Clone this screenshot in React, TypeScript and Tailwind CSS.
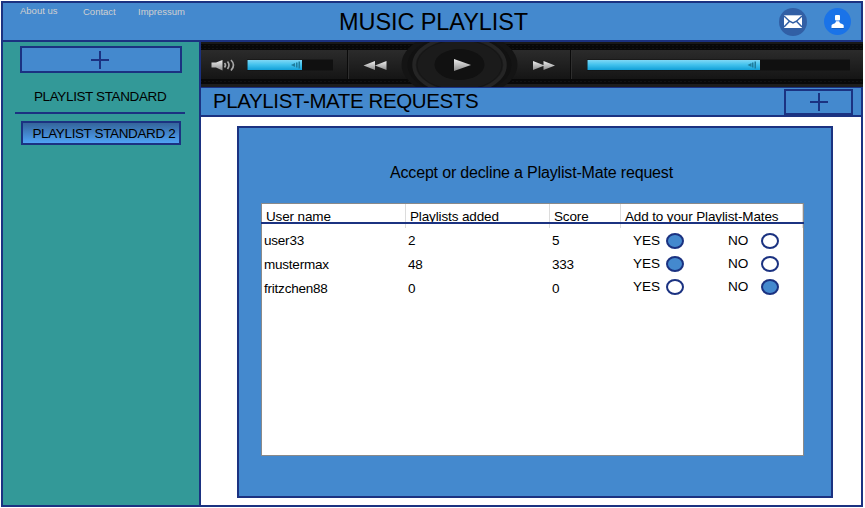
type Request = { name: string; playlists: number; score: number; accepted: boolean };

const requests: Request[] = [
  { name: 'user33', playlists: 2, score: 5, accepted: true },
  { name: 'mustermax', playlists: 48, score: 333, accepted: true },
  { name: 'fritzchen88', playlists: 0, score: 0, accepted: false },
];

function Plus() {
  return (
    <svg width="18" height="18" viewBox="0 0 18 18" className="block shrink-0" shapeRendering="crispEdges">
      <path d="M9 0V18M0 9H18" stroke="#1b3281" strokeWidth="2" />
    </svg>
  );
}

function MailIcon() {
  return (
    <svg width="28" height="28" viewBox="0 0 28 28" className="block">
      <circle cx="14" cy="14" r="14" fill="#315fa5" />
      <rect x="5" y="7.3" width="18" height="12.7" fill="#fff" />
      <path d="M5 8L10.5 13.2L14 15L17.5 13.2L23 8M5 19L10.5 13.2M23 19L17.5 13.2" fill="none" stroke="#315fa5" strokeWidth="1.5" />
    </svg>
  );
}

function UserIcon() {
  return (
    <svg width="27" height="27" viewBox="0 0 27 27" className="block">
      <circle cx="13.5" cy="13.5" r="13.5" fill="#1a73e8" />
      <path d="M8 20.5H20" stroke="#1861c4" />
      <rect x="11" y="7" width="5" height="5.5" rx="1" fill="#fff" />
      <path d="M7.5 20V17.5C7.5 16.2 9.5 16 10.5 15.5C11.5 15 11.7 14 12 13.2H15.2C15.5 14 15.7 15 16.7 15.5C17.7 16 19.7 16.2 19.7 17.5V20Z" fill="#fff" />
    </svg>
  );
}

function Player() {
  return (
    <svg width="662" height="45" viewBox="201 42 662 45" className="relative block shrink-0">
      <defs>
        <linearGradient id="body" x1="0" y1="0" x2="0" y2="1">
          <stop offset="0" stopColor="#2b2b2b" />
          <stop offset="1" stopColor="#151515" />
        </linearGradient>
        <linearGradient id="fill" x1="0" y1="0" x2="0" y2="1">
          <stop offset="0" stopColor="#7fd8f5" />
          <stop offset="0.45" stopColor="#45c3ee" />
          <stop offset="1" stopColor="#12a0d8" />
        </linearGradient>
        <linearGradient id="metal" x1="0" y1="0" x2="0" y2="1">
          <stop offset="0" stopColor="#eeeeee" />
          <stop offset="1" stopColor="#8c8c8c" />
        </linearGradient>
        <pattern id="mesh" width="4" height="3" patternUnits="userSpaceOnUse">
          <rect width="4" height="3" fill="#080808" />
          <rect width="2" height="1" fill="#121212" />
        </pattern>
      </defs>
      <rect x="201" y="42" width="662" height="45" fill="#191919" />
      <rect x="201" y="44" width="662" height="6" fill="url(#mesh)" />
      <rect x="201" y="50" width="662" height="29" fill="url(#body)" />
      <rect x="201" y="79" width="662" height="5" fill="url(#mesh)" />
      <rect x="201" y="84" width="662" height="3" fill="#1d1d1d" />

      <path d="M347.5 50V79M570.5 50V79" stroke="#0a0a0a" />
      <path d="M348.5 50V79M571.5 50V79" stroke="#2e2e2e" />

      <ellipse cx="459.5" cy="64.5" rx="58" ry="34" fill="#141414" />
      <ellipse cx="459.5" cy="65" rx="52" ry="30" fill="#111111" />
      <ellipse cx="459.5" cy="65" rx="45.5" ry="27.5" fill="#1b1b1b" stroke="#252525" strokeWidth="3.5" />
      <ellipse cx="459.5" cy="65" rx="42.5" ry="25" fill="none" stroke="#151515" />
      <ellipse cx="459.5" cy="64.5" rx="25" ry="15.5" fill="#111111" />
      <path d="M454 59L471 65L454 71Z" fill="url(#metal)" />

      <path d="M211.5 62.5H216L222.5 60V70.5L216 67.5H211.5Z" fill="url(#metal)" />
      <path d="M224.5 63Q226.5 65 224.5 67.5M227.5 61.5Q230.5 65 227.5 69M231 60Q236 65 231 70.5" fill="none" stroke="#a6a6a6" strokeWidth="1.7" />

      <rect x="247" y="59.5" width="86" height="11" fill="#101010" />
      <rect x="247.5" y="60" width="54.5" height="10" fill="url(#fill)" />
      <path d="M291 65L295 63V67ZM296 62.5H297.5V67.5H296ZM298.5 61.5H300V68.5H298.5Z" fill="#207d9d" />

      <path d="M363.5 65.5L375 61V70ZM375 65.5L386.5 61V70Z" fill="url(#metal)" />
      <path d="M533 61L544.5 65.5L533 70ZM543.5 61L555 65.5L543.5 70Z" fill="url(#metal)" />

      <rect x="587" y="59.5" width="263" height="11" fill="#101010" />
      <rect x="587.5" y="60" width="172.5" height="10" fill="url(#fill)" />
      <path d="M747.5 65L751.5 63V67ZM752 62.5H753.5V67.5H752ZM754.5 61.5H756V68.5H754.5Z" fill="#207d9d" />
    </svg>
  );
}

function Choice({ label, on }: { label: string; on: boolean }) {
  return (
    <div className="flex items-center">
      <span className="w-[33px] pt-px text-[13.6px] leading-[16px] tracking-[-0.1px]">{label}</span>
      <span
        className={`h-4 w-[18px] rounded-[50%] border-2 border-[#1b3281] ${on ? 'bg-[#4489ce]' : 'bg-white'}`}
      />
    </div>
  );
}

function Column({ title, width, values }: { title: string; width: string; values: (string | number)[] }) {
  return (
    <div className={`${width} shrink-0`}>
      <div className="h-6 border-r border-[#dcdcdc] pl-1 pt-[5px] leading-[15px] tracking-[-0.13px]">{title}</div>
      <div className="pl-[2px]">
        {values.map((v, i) => (
          <div key={i} className="h-6 leading-[25px]">{v}</div>
        ))}
      </div>
    </div>
  );
}

export default function App() {
  return (
    <div className="h-[508px] w-[865px] overflow-hidden bg-white pl-px pt-px font-['Liberation_Sans',Arial,sans-serif] text-black">
      <div className="flex h-[506px] w-[862px] flex-col border-2 border-[#1b3281]">
        <header className="flex h-[39px] shrink-0 border-b-2 border-[#1b3281] bg-[#4489ce]">
          <nav className="flex w-[336px] shrink-0 pl-[17px] pt-[2px] text-[9.5px] leading-3 text-[#d0d0d0]">
            <a className="w-[63px]">About us</a>
            <a className="w-[55px] pt-px">Contact</a>
            <a className="pt-px">Impressum</a>
          </nav>
          <h1 className="whitespace-nowrap text-[23.5px] leading-[38px] tracking-[-0.08px]">MUSIC PLAYLIST</h1>
          <div className="ml-auto flex gap-[17px] pr-[10px] pt-[5px]">
            <MailIcon />
            <UserIcon />
          </div>
        </header>

        <div className="flex min-h-0 flex-1">
          <aside className="flex w-[198px] shrink-0 flex-col border-r-2 border-[#1b3281] bg-[#339998] pt-1 text-[13.5px] tracking-[-0.38px]">
            <button className="ml-[17px] flex h-[27px] w-[162px] items-center justify-center border-2 border-[#1b3281] bg-[#4489ce] pr-[2px]">
              <Plus />
            </button>
            <div className="mt-[15px] h-4 whitespace-nowrap pl-[31px] leading-[17px]">PLAYLIST STANDARD</div>
            <div className="ml-3 mt-2 h-[2px] w-[170px] bg-[#1b3281]" />
            <div className="ml-[18px] mt-[7px] h-6 w-40 whitespace-nowrap border-2 border-[#1b3281] bg-linear-to-b from-[#34659b] to-[#50a3f6] pl-[9.5px] leading-[21px]">
              PLAYLIST STANDARD 2
            </div>
          </aside>

          <main className="flex min-w-0 flex-1 flex-col">
            <Player />
            <div className="flex h-[30px] shrink-0 border-b-2 border-t border-[#1b3281] bg-[#4489ce] pl-3 pr-2">
              <h2 className="whitespace-nowrap text-[20.5px] leading-[26px] tracking-[-0.39px]">PLAYLIST-MATE REQUESTS</h2>
              <button className="ml-auto mt-px flex h-[26px] w-[69px] items-center justify-center border-2 border-[#1b3281]">
                <Plus />
              </button>
            </div>

            <section className="ml-9 mt-[9px] h-[372px] w-[596px] border-2 border-[#1b3281] bg-[#4489ce] pl-[22px] pt-[35px]">
              <p className="h-5 whitespace-nowrap pl-[129px] text-[16px] leading-5 tracking-[-0.17px]">
                Accept or decline a Playlist-Mate request
              </p>
              <div className="relative mt-5 flex h-[253px] w-[543px] border border-[#8a8a8a] bg-white text-[13.5px] tracking-[-0.22px]">
                <Column title="User name" width="w-36" values={requests.map((r) => r.name)} />
                <Column title="Playlists added" width="w-36" values={requests.map((r) => r.playlists)} />
                <Column title="Score" width="w-[71px]" values={requests.map((r) => r.score)} />
                <div className="flex-1">
                  <div className="h-6 whitespace-nowrap border-r border-[#dcdcdc] pl-1 pt-[5px] leading-[15px] tracking-[-0.13px]">
                    Add to your Playlist-Mates
                  </div>
                  <div className="pl-3 pt-px">
                    {requests.map((r) => (
                      <div key={r.name} className="flex h-[23px] items-center gap-11">
                        <Choice label="YES" on={r.accepted} />
                        <Choice label="NO" on={!r.accepted} />
                      </div>
                    ))}
                  </div>
                </div>
                <div className="absolute -left-px -right-px top-[18px] h-[2px] bg-[#1b3281]" />
              </div>
            </section>
          </main>
        </div>
      </div>
    </div>
  );
}
